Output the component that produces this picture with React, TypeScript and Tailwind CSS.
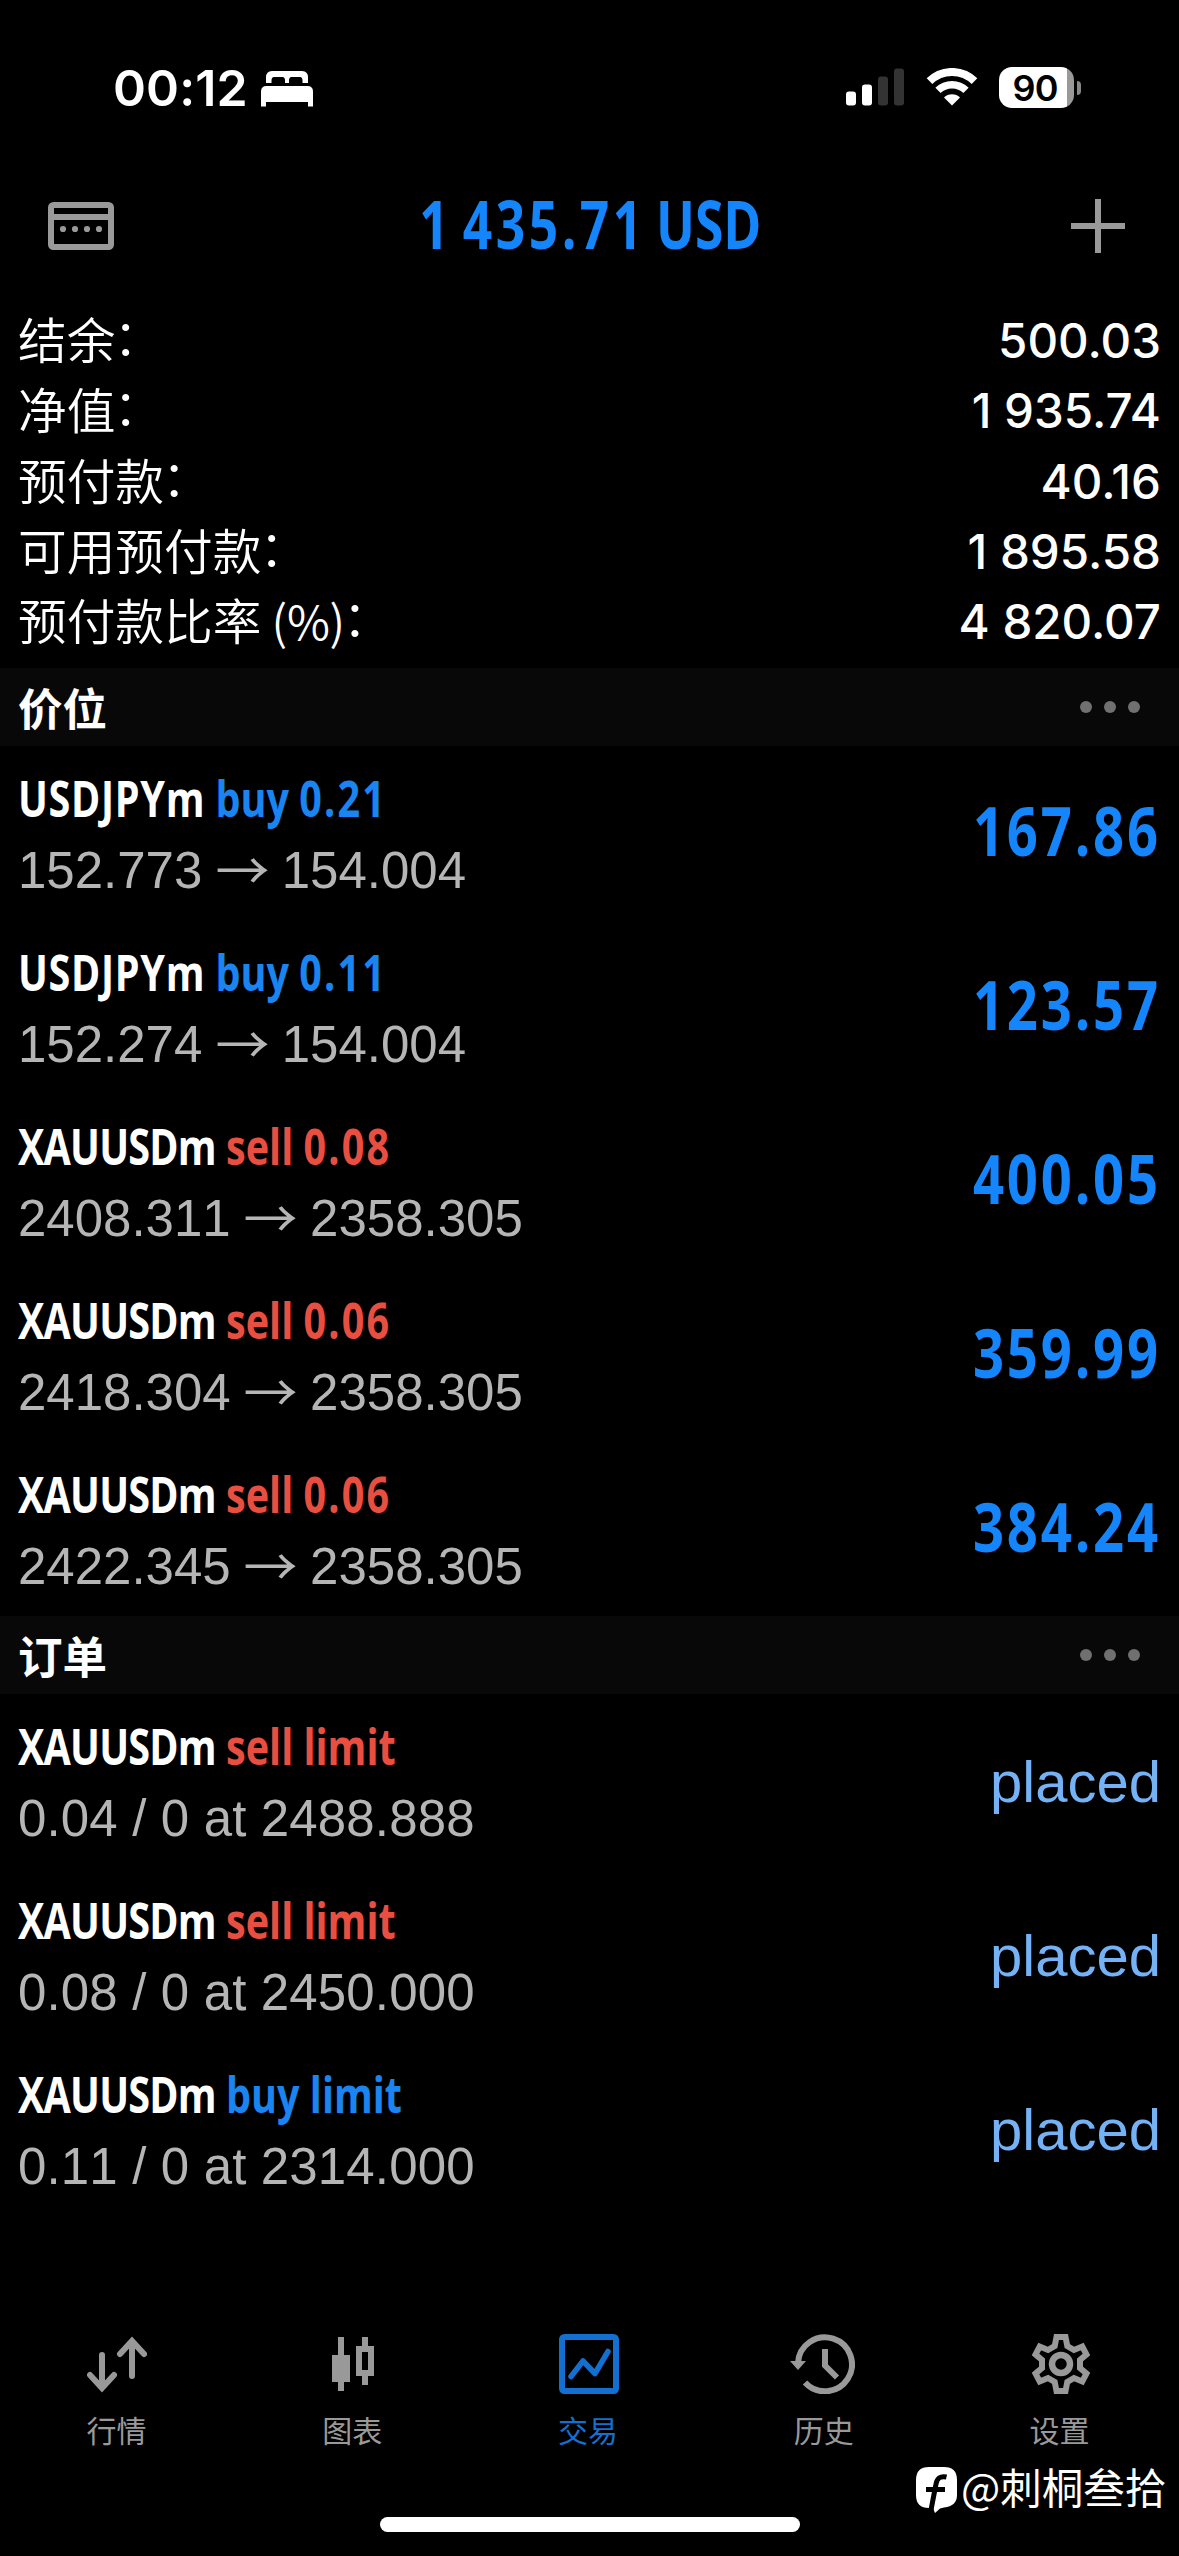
import React from 'react';
import clsx from 'clsx';

type Side = 'buy' | 'sell';

interface Position {
  symbol: string;
  side: Side;
  volume: string;
  open: string;
  current: string;
  profit: string;
}

interface Order {
  symbol: string;
  side: Side;
  details: string;
  status: string;
}

const account = [
  { label: '结余', value: '500.03' },
  { label: '净值', value: '1 935.74' },
  { label: '预付款', value: '40.16' },
  { label: '可用预付款', value: '1 895.58' },
  { label: '预付款比率', unit: ' (%)', value: '4 820.07' },
];

const positions: Position[] = [
  { symbol: 'USDJPYm', side: 'buy', volume: '0.21', open: '152.773', current: '154.004', profit: '167.86' },
  { symbol: 'USDJPYm', side: 'buy', volume: '0.11', open: '152.274', current: '154.004', profit: '123.57' },
  { symbol: 'XAUUSDm', side: 'sell', volume: '0.08', open: '2408.311', current: '2358.305', profit: '400.05' },
  { symbol: 'XAUUSDm', side: 'sell', volume: '0.06', open: '2418.304', current: '2358.305', profit: '359.99' },
  { symbol: 'XAUUSDm', side: 'sell', volume: '0.06', open: '2422.345', current: '2358.305', profit: '384.24' },
];

const orders: Order[] = [
  { symbol: 'XAUUSDm', side: 'sell', details: '0.04 / 0 at 2488.888', status: 'placed' },
  { symbol: 'XAUUSDm', side: 'sell', details: '0.08 / 0 at 2450.000', status: 'placed' },
  { symbol: 'XAUUSDm', side: 'buy', details: '0.11 / 0 at 2314.000', status: 'placed' },
];

const BedIcon = () => (
  <svg width="52" height="36" viewBox="0 0 52 36" fill="#fff">
    <path d="M5 12V6.500Q5 0 11 0H41Q47 0 47 6.500V12H41.500V9.500Q41.500 6 39 6H30.500Q28 6 28 9.500V12H24V9.500Q24 6 21.500 6H13Q10.500 6 10.500 9.500V12Z" />
    <path d="M0 35.500V20.500Q0 15 5.500 15H46.500Q52 15 52 20.500V35.500H47V31H5V35.500Z" />
  </svg>
);

const SignalIcon = () => (
  <svg width="58" height="38" viewBox="0 0 58 38">
    <rect x="0" y="23.500" width="10" height="14" rx="3" fill="#fff" />
    <rect x="16" y="16.500" width="10" height="21" rx="3" fill="#fff" />
    <rect x="32" y="8.500" width="10" height="29" rx="3" fill="#333" />
    <rect x="48" y="0.500" width="10" height="37" rx="3" fill="#333" />
  </svg>
);

const WifiIcon = () => (
  <svg width="52" height="38" viewBox="0 0 52 38" fill="none" stroke="#fff">
    <path d="M3.500 13.200A32 32 0 0 1 48.500 13.200" strokeWidth="8" />
    <path d="M12 22.400A20 20 0 0 1 40 22.400" strokeWidth="7.500" />
    <path d="M18 29.500A11.500 11.500 0 0 1 34 29.500L26 37.500Z" fill="#fff" stroke="none" />
  </svg>
);

const AccountsIcon = () => (
  <svg width="66" height="48" viewBox="0 0 66 48" fill="#999">
    <rect x="3" y="3" width="60" height="42" rx="2.500" fill="none" stroke="#999" strokeWidth="6" />
    <rect x="3" y="12" width="60" height="6" />
    <circle cx="15" cy="27" r="3.100" />
    <circle cx="27" cy="27" r="3.100" />
    <circle cx="39" cy="27" r="3.100" />
    <circle cx="51" cy="27" r="3.100" />
  </svg>
);

const PlusIcon = () => (
  <svg width="54" height="54" viewBox="0 0 54 54" stroke="#999" strokeWidth="6">
    <path d="M27 0V54M0 27H54" />
  </svg>
);

const QuotesIcon = () => (
  <svg width="60" height="60" viewBox="0 0 60 60" fill="none" stroke="currentColor" strokeWidth="6" strokeLinecap="round">
    <path d="M15 21V53M3 41L15 54L27 41" />
    <path d="M45 42V8M33 20L45 7L57 20" />
  </svg>
);

const ChartsIcon = () => (
  <svg width="60" height="60" viewBox="0 0 60 60" fill="currentColor">
    <path d="M15 3H21V21H27V48H21V57H15V48H9V21H15Z" />
    <path fillRule="evenodd" d="M39 3H45V12H51V42H45V51H39V42H33V12H39ZM39 18V36H45V18Z" />
  </svg>
);

const TradeIcon = () => (
  <svg width="60" height="60" viewBox="0 0 60 60" fill="none" stroke="currentColor" strokeWidth="6">
    <rect x="3" y="3" width="54" height="54" rx="2.500" />
    <path d="M12 42.500L24 27L36 39.500L49 17.500" strokeWidth="5.500" strokeLinecap="round" strokeLinejoin="round" />
  </svg>
);

const HistoryIcon = () => (
  <svg width="65" height="60" viewBox="0 0 65 60" className="mr-[5px]" fill="none" stroke="currentColor" strokeWidth="6">
    <path d="M8 29A27 27 0 1 1 15 48.500" />
    <path d="M0 27H16L8 36Z" fill="currentColor" stroke="none" />
    <path d="M35 15V31.500L47 43.500" />
  </svg>
);

const SettingsIcon = () => (
  <svg width="60" height="60" viewBox="0 0 60 60" fill="none" stroke="currentColor" strokeWidth="6">
    <path d="M25.500 3H34.500L36.300 12L43 16L51.300 12.500L55.500 20.500L49 26V34L55.500 39.500L51.300 47.500L43 44L36.300 48L34.500 57H25.500L23.700 48L17 44L8.700 47.500L4.500 39.500L11 34V26L4.500 20.500L8.700 12.500L17 16L23.700 12Z" />
    <circle cx="30" cy="30" r="9" strokeWidth="6.500" />
  </svg>
);

const tabs = [
  { label: '行情', icon: QuotesIcon },
  { label: '图表', icon: ChartsIcon },
  { label: '交易', icon: TradeIcon, active: true },
  { label: '历史', icon: HistoryIcon },
  { label: '设置', icon: SettingsIcon },
];

const StatusBar = () => (
  <div className="flex h-[155px] shrink-0 items-start justify-between pl-[113px] pr-[98px] pt-[66px]">
    <div className="flex items-start">
      <span className="w-[148px] text-[50px] leading-[44px] font-semibold tracking-[0.1px] whitespace-nowrap">00:12</span>
      <div className="pt-[5px]">
        <BedIcon />
      </div>
    </div>
    <div className="flex items-start">
      <div className="mr-[22px] pt-[2px]">
        <SignalIcon />
      </div>
      <div className="mr-[21px] pt-[2px]">
        <WifiIcon />
      </div>
      <div className="flex items-center gap-[3px] pt-[1px]">
        <div className="flex h-[41px] w-[75px] items-center justify-center overflow-hidden rounded-[13px] bg-linear-to-r from-white from-[91%] to-[#999] to-[91%] pr-[3px] text-[36px] font-semibold tracking-[-1px] text-black">
          90
        </div>
        <div className="h-[14px] w-[4px] rounded-r-full bg-[#888]" />
      </div>
    </div>
  </div>
);

const SectionHeader: React.FC<{ title: string }> = ({ title }) => (
  <div className="flex h-[78px] shrink-0 items-center justify-between bg-[#080808] pl-[18px] pr-[39px]">
    <h2 className="font-['Noto_Sans_CJK_SC'] text-[44.500px] leading-[76px] font-bold">{title}</h2>
    <div className="flex gap-[12px]">
      <span className="h-[12px] w-[12px] rounded-full bg-[#707070]" />
      <span className="h-[12px] w-[12px] rounded-full bg-[#707070]" />
      <span className="h-[12px] w-[12px] rounded-full bg-[#707070]" />
    </div>
  </div>
);

const RowTitle: React.FC<{ symbol: string; side: Side; volume?: string }> = ({ symbol, side, volume }) => (
  <div className="h-[72px] origin-left scale-x-[0.775] font-['Open_Sans'] text-[51px] leading-[72px] font-bold whitespace-nowrap">
    <span className={clsx(symbol.startsWith('XAU') ? 'tracking-[-1px]' : 'tracking-[0.9px]')}>{symbol}</span>{' '}
    <span className={clsx(side === 'buy' ? 'text-[#1a84f0]' : 'text-[#e94f40]')}>
      {side} {volume ? <span className="tracking-[2.800px]">{volume}</span> : 'limit'}
    </span>
  </div>
);

export default function App() {
  return (
    <div
      lang="zh-CN"
      className="flex h-[2556px] w-[1179px] flex-col overflow-hidden bg-black font-['Inter','Noto_Sans_CJK_SC',sans-serif] text-white"
    >
      <StatusBar />

      {/* Header */}
      <div className="flex h-[142px] shrink-0 items-center justify-between pl-[48px] pr-[54px]">
        <AccountsIcon />
        <h1 className="-mt-[5px] mr-[4px] scale-x-[0.78] font-['Open_Sans'] text-[66px] font-bold whitespace-nowrap text-[#1485fb]">
          <span className="tracking-[4.500px] [word-spacing:-8px]">1 435.71</span>
          <span className="[word-spacing:-4px]"> USD</span>
        </h1>
        <PlusIcon />
      </div>

      {/* Account summary */}
      <div className="h-[371px] shrink-0 px-[18px] pt-[9px]">
        {account.map((item) => (
          <div key={item.label} className="flex h-[70.250px] items-center justify-between whitespace-nowrap">
            <span className="-mt-[6px] font-['Noto_Sans_CJK_SC'] text-[48.700px] leading-[70px] font-[350]">
              {item.label}
              {item.unit && <span className="text-[47px] tracking-[-0.3px]">{item.unit}</span>}
              <span className="inline-block -translate-x-[2px] -translate-y-[4px]">：</span>
            </span>
            <span className="text-[47.500px] leading-[70px] font-medium">{item.value}</span>
          </div>
        ))}
      </div>

      {/* Positions */}
      <SectionHeader title="价位" />
      {positions.map((p, index) => (
        <div key={index} className="flex h-[174px] shrink-0 justify-between px-[18px]">
          <div className="pt-[15px]">
            <RowTitle symbol={p.symbol} side={p.side} volume={p.volume} />
            <div className="pt-[2px] font-['Liberation_Sans','Noto_Sans_CJK_SC'] text-[51px] leading-[72px] whitespace-nowrap text-[#b5b5b5] [font-kerning:none]">
              {p.open}{' '}
              <span className="inline-block translate-y-[2px] scale-x-[1.06] font-['Noto_Sans_CJK_SC'] leading-none">→</span>{' '}
              {p.current}
            </div>
          </div>
          <div className="origin-right scale-x-[0.8] font-['Open_Sans'] text-[68px] leading-[168px] font-bold tracking-[3.500px] text-[#1485fb]">
            {p.profit}
          </div>
        </div>
      ))}

      {/* Pending orders */}
      <SectionHeader title="订单" />
      {orders.map((o, index) => (
        <div key={index} className="flex h-[174px] shrink-0 justify-between px-[18px]">
          <div className="pt-[15px]">
            <RowTitle symbol={o.symbol} side={o.side} />
            <div className="pt-[2px] font-['Liberation_Sans'] text-[51px] leading-[72px] tracking-[0.15px] whitespace-nowrap text-[#b5b5b5] [font-kerning:none]">
              {o.details}
            </div>
          </div>
          <div className="font-['Liberation_Sans'] text-[58px] leading-[176px] text-[#74b1f5]">{o.status}</div>
        </div>
      ))}

      {/* Tab bar */}
      <div className="mt-auto flex h-[222px] shrink-0">
        {tabs.map((tab) => {
          const Icon = tab.icon;
          return (
            <div
              key={tab.label}
              className={clsx('flex flex-1 flex-col items-center pr-px', tab.active ? 'text-[#1470d0]' : 'text-[#999]')}
            >
              <Icon />
              <span className="mt-[13px] mr-[2px] font-['Noto_Sans_CJK_SC'] text-[30px] leading-[44px]">{tab.label}</span>
            </div>
          );
        })}
      </div>

      {/* Home indicator */}
      <div className="absolute top-[2517px] left-[380px] h-[15px] w-[420px] rounded-full bg-white" />

      {/* Watermark */}
      <div className="absolute top-[2458px] left-[916px] flex items-center gap-[4px]">
        <svg width="41" height="46" viewBox="0 0 41 46" className="mt-[8px]">
          <path d="M13 0H28Q41 0 41 13V28Q41 39 28 40.500L24 41.500L19 46L17 41H13Q0 41 0 28V13Q0 0 13 0Z" fill="#fff" />
          <path d="M30.500 10Q21.500 8 20 17L15 43M10 22.500H29" fill="none" stroke="#000" strokeWidth="5" />
        </svg>
        <span className="font-['Noto_Sans_CJK_SC'] text-[41.500px] leading-[56px] whitespace-nowrap">@刺桐叁拾</span>
      </div>
    </div>
  );
}
